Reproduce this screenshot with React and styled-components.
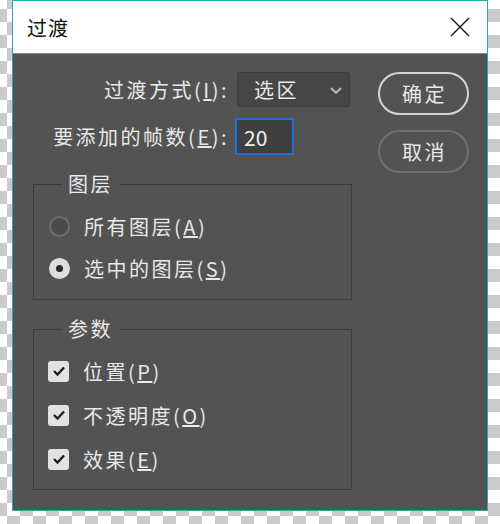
import React from "react";
import styled, { createGlobalStyle } from "styled-components";

const GlobalStyle = createGlobalStyle`
  html, body {
    margin: 0;
    padding: 0;
  }
  body {
    font-family: "Noto Sans CJK SC", "Noto Sans", sans-serif;
  }
`;

const Page = styled.div`
  width: 500px;
  height: 524px;
  box-sizing: border-box;
  padding: 0 12px 13px 12px;
  background-color: #fff;
  background-image: conic-gradient(#cbcbcb 25%, #fff 0 50%, #cbcbcb 0 75%, #fff 0);
  background-size: 26px 26px;
  background-position: -6px -4px;
`;

const Dialog = styled.div`
  height: 511px;
  box-sizing: border-box;
  border: 1px solid #27a9a6;
  display: flex;
  flex-direction: column;
  background: #535353;
`;

const TitleBar = styled.div`
  height: 52px;
  flex-shrink: 0;
  background: #fff;
  display: flex;
  align-items: center;
  justify-content: space-between;
  padding: 0 17px 0 14px;
  border-bottom: 1px solid #8a8a8a;
`;

const Title = styled.span`
  font-size: 20px;
  color: #111;
  letter-spacing: 1px;
`;

const Body = styled.div`
  flex: 1;
  display: flex;
  gap: 26px;
  padding: 18px 18px 0 20px;
  color: #e8e8e8;
  font-size: 20px;
  letter-spacing: 2.5px;
`;

const FormColumn = styled.div`
  width: 319px;
  display: flex;
  flex-direction: column;
`;

const Fields = styled.div`
  display: grid;
  grid-template-columns: 194px auto;
  column-gap: 8px;
  row-gap: 11px;
  align-items: center;
  margin-bottom: 17px;
`;

const Label = styled.label`
  text-align: right;
  white-space: nowrap;
  line-height: 24px;
  letter-spacing: 2.5px;
  margin-right: -2px;
`;

const Select = styled.div`
  width: 113px;
  height: 35px;
  box-sizing: border-box;
  margin-left: 2px;
  background: #464646;
  border: 1px solid #3d3d3d;
  border-radius: 3px;
  display: flex;
  align-items: center;
  justify-content: space-between;
  padding: 0 6px 0 16px;
`;

const Input = styled.div`
  width: 59px;
  height: 37px;
  box-sizing: border-box;
  background: #3f3f3f;
  border: 2px solid #1f6fd8;
  display: flex;
  align-items: center;
  padding-left: 7px;
  font-size: 21px;
  letter-spacing: 0;
  color: #f0f0f0;
`;

const Group = styled.fieldset`
  margin: 0 0 ${(p) => p.gapBelow || 0}px 0;
  padding: 18px 16px ${(p) => p.padBottom}px 16px;
  border: 1px solid #3c3c3c;
  min-width: 0;
  display: flex;
  flex-direction: column;
  gap: ${(p) => p.rowGap}px;
`;

const Legend = styled.legend`
  margin-left: 12px;
  padding: 0 6px;
  line-height: 24px;
`;

const OptionRow = styled.div`
  display: flex;
  align-items: center;
  height: 24px;
  gap: 14px;
  white-space: nowrap;
`;

const Radio = styled.span`
  width: 21px;
  height: 21px;
  box-sizing: border-box;
  border-radius: 50%;
  margin-left: -1px;
  border: ${(p) => (p.checked ? "none" : "2px solid #6e6e6e")};
  background: ${(p) => (p.checked ? "#dedede" : "#4b4b4b")};
  display: flex;
  align-items: center;
  justify-content: center;
  &::after {
    content: "";
    display: ${(p) => (p.checked ? "block" : "none")};
    width: 7px;
    height: 7px;
    border-radius: 50%;
    background: #2a2a2a;
  }
`;

const Check = styled.span`
  width: 21px;
  height: 21px;
  box-sizing: border-box;
  margin-left: -2px;
  border-radius: 3px;
  background: #e2e2e2;
  display: flex;
  align-items: center;
  justify-content: center;
`;

const ButtonColumn = styled.div`
  display: flex;
  flex-direction: column;
  gap: 15px;
`;

const Button = styled.button`
  width: 91px;
  height: 43px;
  border-radius: 22px;
  background: transparent;
  border: 2px solid ${(p) => (p.primary ? "#d4d4d4" : "#707070")};
  color: #e8e8e8;
  font-family: inherit;
  font-size: 20px;
  letter-spacing: 2.5px;
  padding: 0 0 0 2px;
`;

function CloseIcon() {
  return (
    <svg width="20" height="20" viewBox="0 0 20 20">
      <path d="M1 1 L19 19 M19 1 L1 19" stroke="#111" strokeWidth="1.4" fill="none" />
    </svg>
  );
}

function Chevron() {
  return (
    <svg width="14" height="10" viewBox="0 0 14 10">
      <path d="M2 3 L7 8 L12 3" stroke="#bdbdbd" strokeWidth="1.8" fill="none" />
    </svg>
  );
}

function Tick() {
  return (
    <svg width="14" height="12" viewBox="0 0 14 12">
      <path d="M2 6 L5.5 9.5 L12 2.5" stroke="#222" strokeWidth="2.4" fill="none" />
    </svg>
  );
}

export default function App() {
  return (
    <Page>
      <GlobalStyle />
      <Dialog>
        <TitleBar>
          <Title>过渡</Title>
          <CloseIcon />
        </TitleBar>
        <Body>
          <FormColumn>
            <Fields>
              <Label>过渡方式(<u>I</u>):</Label>
              <Select>
                <span>选区</span>
                <Chevron />
              </Select>
              <Label>要添加的帧数(<u>E</u>):</Label>
              <Input>20</Input>
            </Fields>
            <Group rowGap={18} padBottom={19} gapBelow={17}>
              <Legend>图层</Legend>
              <OptionRow>
                <Radio />
                <span>所有图层(<u>A</u>)</span>
              </OptionRow>
              <OptionRow>
                <Radio checked />
                <span>选中的图层(<u>S</u>)</span>
              </OptionRow>
            </Group>
            <Group rowGap={20} padBottom={18}>
              <Legend>参数</Legend>
              <OptionRow>
                <Check><Tick /></Check>
                <span>位置(<u>P</u>)</span>
              </OptionRow>
              <OptionRow>
                <Check><Tick /></Check>
                <span>不透明度(<u>O</u>)</span>
              </OptionRow>
              <OptionRow>
                <Check><Tick /></Check>
                <span>效果(<u>E</u>)</span>
              </OptionRow>
            </Group>
          </FormColumn>
          <ButtonColumn>
            <Button primary>确定</Button>
            <Button>取消</Button>
          </ButtonColumn>
        </Body>
      </Dialog>
    </Page>
  );
}
